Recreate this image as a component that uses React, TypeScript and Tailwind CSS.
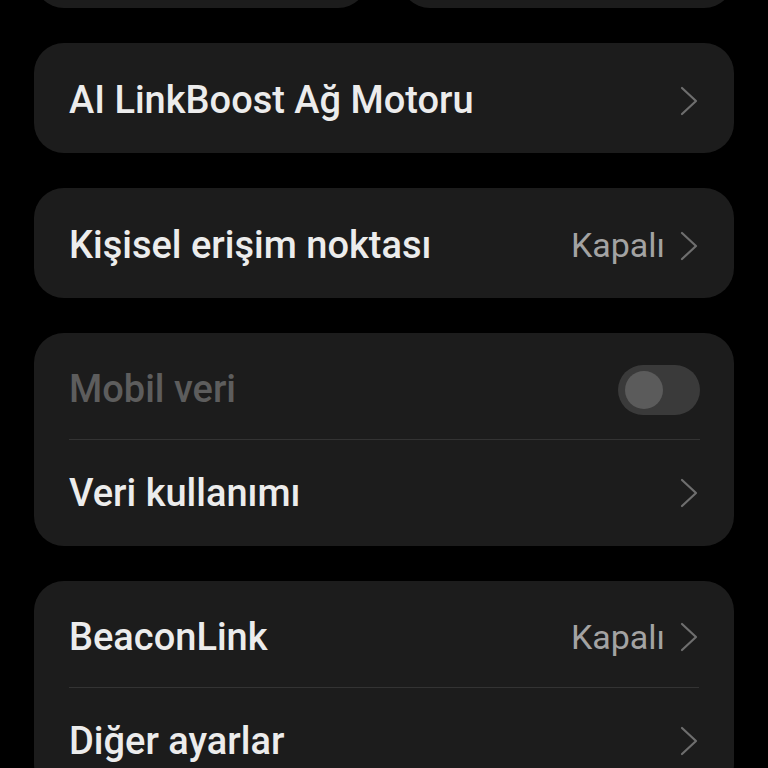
import React from "react";

function Chevron() {
  return (
    <svg width="20" height="30" viewBox="0 0 20 30" fill="none" className="shrink-0">
      <polyline points="3,2 17,15 3,28" stroke="#6e6e6e" strokeWidth="2.2" strokeLinecap="round" strokeLinejoin="round" />
    </svg>
  );
}

function Row({ title, value, chevron = true, disabled = false, toggle = false, h = "h-[106px]" }: { title: string; value?: string; chevron?: boolean; disabled?: boolean; toggle?: boolean; h?: string }) {
  return (
    <div className={`flex items-center justify-between ${h}`}>
      <span className={`text-[38px] font-medium ${disabled ? "text-[#5d5d5d]" : "text-[#ececec]"}`}>{title}</span>
      <div className="flex items-center gap-[14px]">
        {value && <span className="text-[34px] text-[#a3a3a3]">{value}</span>}
        {toggle && (
          <div className="w-[82px] h-[50px] rounded-full bg-[#3a3a3a] flex items-center pl-[7px]">
            <div className="w-[38px] h-[38px] rounded-full bg-[#5b5b5b]" />
          </div>
        )}
        {chevron && <Chevron />}
      </div>
    </div>
  );
}

export default function App() {
  return (
    <div className="w-[768px] h-[768px] bg-black overflow-hidden flex flex-col gap-[35px] px-[34px]" style={{ fontFamily: "Roboto, 'Noto Sans', sans-serif" }}>
      <div className="flex gap-[32px] h-[8px] overflow-visible">
        <div className="flex-1 h-[80px] mt-[-72px] rounded-[30px] bg-[#1c1c1c]" />
        <div className="flex-1 h-[80px] mt-[-72px] rounded-[30px] bg-[#1c1c1c]" />
      </div>
      <div className="rounded-[30px] bg-[#1c1c1c] pl-[35px] pr-[35px]">
        <Row title="AI LinkBoost Ağ Motoru" h="h-[110px] pt-[5px]" />
      </div>
      <div className="rounded-[30px] bg-[#1c1c1c] pl-[35px] pr-[35px]">
        <Row title="Kişisel erişim noktası" value="Kapalı" h="h-[110px] pt-[5px]" />
      </div>
      <div className="rounded-[30px] bg-[#1c1c1c] pl-[35px] pr-[34px]">
        <Row title="Mobil veri" disabled toggle chevron={false} h="h-[106px] pt-[7px]" />
        <div className="h-px bg-[#333333]" />
        <div className="pr-[1px]"><Row title="Veri kullanımı" /></div>
      </div>
      <div className="rounded-[30px] bg-[#1c1c1c] pl-[35px] pr-[35px] shrink-0">
        <Row title="BeaconLink" value="Kapalı" h="h-[106px] pt-[6px]" />
        <div className="h-px bg-[#333333]" />
        <Row title="Diğer ayarlar" />
      </div>
    </div>
  );
}
